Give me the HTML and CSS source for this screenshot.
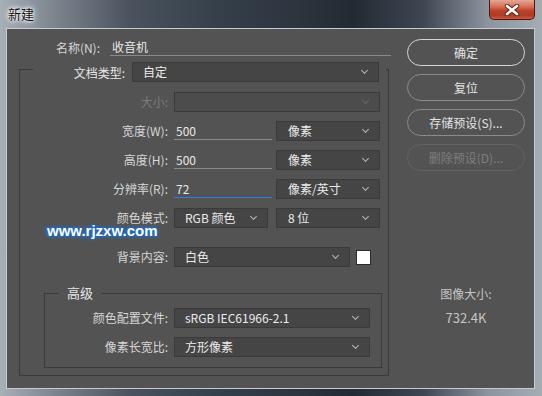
FILE: index.html
```html
<!DOCTYPE html>
<html lang="zh-CN">
<head>
    <meta charset="UTF-8">
    <meta name="viewport" content="width=device-width, initial-scale=1.0">
    <title>新建</title>
    <link rel="stylesheet" href="styles.css">
</head>
<body>

<div class="window">
    <div class="titlebar">
        <span class="title">新建</span>
        <div class="close">
            <svg width="16" height="12" viewBox="0 0 16 12">
                <path d="M3 2 L13 10 M13 2 L3 10" stroke="#5b2416" stroke-width="4.5" stroke-linecap="round"/>
                <path d="M3 2 L13 10 M13 2 L3 10" stroke="#fff" stroke-width="2.6" stroke-linecap="round"/>
            </svg>
        </div>
    </div>

    <div class="client">
        <div class="form">
            <div class="name-row">
                <label class="name-label">名称(N):</label>
                <div class="field name-field">收音机</div>
            </div>

            <div class="group">
                <div class="group-head">
                    <label class="head-label">文档类型:</label>
                    <div class="select w-doc">自定</div>
                </div>

                <div class="row first">
                    <label class="off">大小:</label>
                    <div class="select w-size disabled"></div>
                </div>

                <div class="row">
                    <label>宽度(W):</label>
                    <div class="field w-num">500</div>
                    <div class="select w-unit">像素</div>
                </div>

                <div class="row">
                    <label>高度(H):</label>
                    <div class="field w-num">500</div>
                    <div class="select w-unit">像素</div>
                </div>

                <div class="row">
                    <label>分辨率(R):</label>
                    <div class="field w-num focus">72</div>
                    <div class="select w-unit">像素/英寸</div>
                </div>

                <div class="row">
                    <label>颜色模式:</label>
                    <div class="select w-mode">RGB 颜色</div>
                    <div class="select w-unit bits">8 位</div>
                </div>

                <div class="row bg-row">
                    <label>背景内容:</label>
                    <div class="select w-bg">白色</div>
                    <div class="swatch"></div>
                </div>

                <div class="advanced">
                    <div class="adv-title">高级</div>
                    <div class="row adv-first">
                        <label>颜色配置文件:</label>
                        <div class="select w-adv">sRGB IEC61966-2.1</div>
                    </div>
                    <div class="row">
                        <label>像素长宽比:</label>
                        <div class="select w-adv">方形像素</div>
                    </div>
                </div>
            </div>
        </div>

        <div class="side">
            <button class="btn primary">确定</button>
            <button class="btn">复位</button>
            <button class="btn">存储预设(S)...</button>
            <button class="btn" disabled>删除预设(D)...</button>

            <div class="size-title">图像大小:</div>
            <div class="size-value">732.4K</div>
        </div>

        <div class="watermark">www.rjzxw.com</div>
    </div>
</div>

</body>
</html>
```

FILE: styles.css
```css
* {
    box-sizing: border-box;
}
body {
    margin: 0;
    width: 542px;
    height: 396px;
    overflow: hidden;
    font-family: "Noto Sans CJK SC", "DejaVu Sans", sans-serif;
    font-size: 12px;
}
.window {
    width: 542px;
    height: 396px;
    padding: 0 7px 7px 6px;
    background: linear-gradient(90deg, #a7afb7 0%, #7c858e 10%, #4a535d 24%, #36404a 40%, #2c343e 55%, #222a33 65%, #3d4651 78%, #8c959e 90%, #a4acb4 100%);
    display: flex;
    flex-direction: column;
}
.titlebar {
    height: 28px;
    position: relative;
    flex-shrink: 0;
}
.title {
    display: block;
    padding-left: 2px;
    line-height: 28px;
    color: #111;
    font-size: 13px;
    text-shadow: 0 0 6px #fff, 0 0 4px #fff, 0 0 2px #fff;
}
.close {
    position: absolute;
    top: 0;
    right: 0;
    width: 46px;
    height: 20px;
    display: flex;
    align-items: center;
    justify-content: center;
    border: 1px solid #4a1a12;
    border-top: none;
    border-radius: 0 0 5px 5px;
    background: linear-gradient(180deg, #e7a894 0%, #d37059 35%, #c0412a 55%, #b03a24 80%, #c85a40 100%);
}
.client {
    flex: 1;
    position: relative;
    display: flex;
    background: #535353;
    border: 1px solid #c5ccd3;
    color: #d6d6d6;
}
.form {
    width: 385px;
    padding: 9px 0 0 12px;
}
.name-row {
    display: flex;
    height: 20px;
    line-height: 20px;
}
.name-label {
    width: 81px;
    text-align: right;
    margin-right: 10px;
}
.name-field {
    width: 281px;
}
.field {
    height: 18px;
    line-height: 18px;
    padding-left: 2px;
    color: #e8e8e8;
    border-bottom: 1px solid #8a8a8a;
}
.field.focus {
    border-bottom-color: #2f7fdf;
}
.group {
    position: relative;
    width: 370px;
    margin-top: 11px;
    padding-bottom: 7px;
    border: 1px solid #3a3a3a;
}
.group-head {
    display: flex;
    align-items: center;
    height: 20px;
    margin: -8px 2px 0 13px;
    background: #535353;
}
.head-label {
    width: 92px;
    text-align: right;
    color: #e6e6e6;
    margin-right: 7px;
}
.row {
    display: flex;
    align-items: center;
    height: 20px;
    margin-top: 9px;
}
.row.first {
    margin-top: 10px;
}
.row.bg-row {
    margin-top: 19px;
}
.row label {
    width: 148px;
    line-height: 12px;
    text-align: right;
    margin-right: 6px;
}
.row label.off {
    color: #7c7c7c;
}
.select {
    position: relative;
    height: 20px;
    line-height: 18px;
    padding-left: 10px;
    background: #454545;
    border: 1px solid #3a3a3a;
    color: #ececec;
}
.select::after {
    content: "";
    position: absolute;
    right: 11px;
    top: 5px;
    width: 4px;
    height: 4px;
    border-right: 1px solid #b8b8b8;
    border-bottom: 1px solid #b8b8b8;
    transform: rotate(45deg);
}
.select.disabled {
    background: #4c4c4c;
}
.select.disabled::after {
    border-color: #6a6a6a;
}
.w-doc {
    width: 247px;
}
.w-size {
    width: 206px;
}
.w-num {
    width: 98px;
    margin-right: 4px;
}
.w-unit {
    width: 104px;
    padding-left: 11px;
}
.w-mode {
    width: 94px;
    margin-right: 8px;
}
.w-bg {
    width: 176px;
    margin-right: 6px;
}
.w-adv {
    width: 196px;
}
.swatch {
    width: 15px;
    height: 15px;
    background: #fff;
    border: 1px solid #2b2b2b;
}
.advanced {
    width: 338px;
    margin: 26px 0 0 24px;
    padding-bottom: 10px;
    border: 1px solid #3a3a3a;
}
.advanced .row label {
    width: 123px;
}
.adv-title {
    width: max-content;
    margin: -9px 0 0 14px;
    padding: 0 8px;
    line-height: 16px;
    background: #535353;
    color: #e6e6e6;
    font-size: 13px;
}
.row.adv-first {
    margin-top: 7px;
}
.side {
    width: 118px;
    margin-left: 15px;
    padding-top: 10px;
    display: flex;
    flex-direction: column;
}
.btn {
    width: 118px;
    height: 27px;
    margin-bottom: 8px;
    border: 1px solid #8c8c8c;
    border-radius: 14px;
    background: #535353;
    color: #e4e4e4;
    font-family: inherit;
    font-size: 12px;
    padding: 0;
}
.btn.primary {
    border-color: #d6d6d6;
}
.btn:disabled {
    border-color: #626262;
    color: #7e7e7e;
}
.size-title {
    margin-top: 107px;
    line-height: 16px;
    text-align: center;
    color: #c6c6c6;
}
.size-value {
    margin-top: 8px;
    line-height: 16px;
    text-align: center;
    color: #c6c6c6;
    font-size: 13px;
}
.watermark {
    position: absolute;
    left: 40px;
    top: 197px;
    line-height: 10px;
    font-family: "Liberation Sans", Arial, sans-serif;
    font-weight: bold;
    font-size: 15px;
    color: #fff;
    text-shadow: 1px 0 0 #1565c8, -1px 0 0 #1565c8, 0 1px 0 #1565c8, 0 -1px 0 #1565c8, 0 0 3px #1f82e6, 0 0 4px #1f82e6;
}
```
